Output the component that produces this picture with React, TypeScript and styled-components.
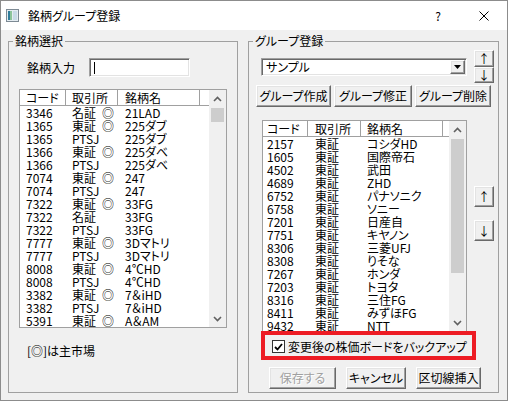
import React from "react";
import styled, { createGlobalStyle, css } from "styled-components";

type Row = [string, string, string];

interface Column {
  title: string;
  width: number;
  pad: number;
}

const MAIN = "\u2002◎";

const leftRows: Row[] = [
  ["3346", "名証" + MAIN, "21LAD"],
  ["1365", "東証" + MAIN, "225ダブ"],
  ["1365", "PTSJ", "225ダブ"],
  ["1366", "東証" + MAIN, "225ダベ"],
  ["1366", "PTSJ", "225ダベ"],
  ["7074", "東証" + MAIN, "247"],
  ["7074", "PTSJ", "247"],
  ["7322", "東証" + MAIN, "33FG"],
  ["7322", "名証", "33FG"],
  ["7322", "PTSJ", "33FG"],
  ["7777", "東証" + MAIN, "3Dマトリ"],
  ["7777", "PTSJ", "3Dマトリ"],
  ["8008", "東証" + MAIN, "4℃HD"],
  ["8008", "PTSJ", "4℃HD"],
  ["3382", "東証" + MAIN, "7＆iHD"],
  ["3382", "PTSJ", "7＆iHD"],
  ["5391", "東証" + MAIN, "A＆AM"],
];

const rightRows: Row[] = [
  ["2157", "東証", "コシダHD"],
  ["1605", "東証", "国際帝石"],
  ["4502", "東証", "武田"],
  ["4689", "東証", "ZHD"],
  ["6752", "東証", "パナソニク"],
  ["6758", "東証", "ソニー"],
  ["7201", "東証", "日産自"],
  ["7751", "東証", "キヤノン"],
  ["8306", "東証", "三菱UFJ"],
  ["8308", "東証", "りそな"],
  ["7267", "東証", "ホンダ"],
  ["7203", "東証", "トヨタ"],
  ["8316", "東証", "三住FG"],
  ["8411", "東証", "みずほFG"],
  ["9432", "東証", "NTT"],
];

const leftColumns: Column[] = [
  { title: "コード", width: 46, pad: 6 },
  { title: "取引所", width: 52, pad: 6 },
  { title: "銘柄名", width: 82, pad: 7 },
];

const rightColumns: Column[] = [
  { title: "コード", width: 45, pad: 4 },
  { title: "取引所", width: 53, pad: 7 },
  { title: "銘柄名", width: 82, pad: 6 },
];

const GlobalStyle = createGlobalStyle`
  html, body {
    margin: 0;
    padding: 0;
    background: #ffffff;
  }
  body {
    font-family: "Noto Sans CJK JP", "Noto Sans", sans-serif;
    font-size: 12px;
    color: #000000;
    font-feature-settings: "palt";
  }
  * {
    box-sizing: border-box;
  }
`;

const raised = css`
  background: #f0f0f0;
  border: 1px solid;
  border-color: #ffffff #696969 #696969 #ffffff;
  box-shadow: inset -1px -1px 0 #a0a0a0, inset 1px 1px 0 #e3e3e3;
`;

const sunken = css`
  background: #ffffff;
  border: 1px solid;
  border-color: #a0a0a0 #ffffff #ffffff #a0a0a0;
  box-shadow: inset 1px 1px 0 #696969, inset -1px -1px 0 #e3e3e3;
`;

const Window = styled.div`
  width: 508px;
  height: 401px;
  border: 1px solid #8c8c8c;
  background: #f0f0f0;
  display: flex;
  flex-direction: column;
  overflow: hidden;
`;

const TitleBar = styled.div`
  height: 29px;
  flex-shrink: 0;
  background: #ffffff;
  display: flex;
  align-items: center;
`;

const AppIcon = styled.svg`
  margin-left: 5px;
  width: 13px;
  height: 13px;
`;

const TitleText = styled.span`
  margin-left: 9px;
  font-size: 12px;
  line-height: 16px;
`;

const Caption = styled.div`
  margin-left: auto;
  height: 100%;
  display: flex;
`;

const CaptionButton = styled.div`
  width: 46px;
  height: 100%;
  display: flex;
  align-items: center;
  justify-content: center;
  font-size: 12px;
`;

const Body = styled.div`
  flex: 1;
  display: flex;
  gap: 10px;
  padding: 3px 0 0 7px;
`;

const Group = styled.fieldset<{ $width: number }>`
  margin: 0;
  padding: 0;
  min-width: 0;
  width: ${(p) => p.$width}px;
  height: 360px;
  border: 1px solid #a0a0a0;
`;

const Legend = styled.legend`
  margin-left: 4px;
  padding: 0 2px;
  font-size: 12px;
  line-height: 16px;
`;

const GroupInner = styled.div`
  display: flex;
  flex-direction: column;
  align-items: flex-start;
`;

/* ---- left side ---- */

const SearchRow = styled.div`
  margin: 9px 0 0 18px;
  height: 19px;
  display: flex;
  align-items: center;
`;

const FieldLabel = styled.span`
  width: 62px;
  line-height: 16px;
`;

const TextBox = styled.div`
  ${sunken}
  width: 101px;
  height: 19px;
  display: flex;
  align-items: center;
  padding-left: 4px;
`;

const Caret = styled.span`
  width: 1px;
  height: 12px;
  background: #000000;
`;

const Note = styled.div`
  margin: 15px 0 0 18px;
  line-height: 16px;
`;

/* ---- list view ---- */

const ListFrame = styled.div<{ $width: number; $height: number }>`
  width: ${(p) => p.$width}px;
  height: ${(p) => p.$height}px;
  border: 1px solid #a0a0a0;
  background: #ffffff;
  display: flex;
  overflow: hidden;
`;

const ListMain = styled.div`
  flex: 1;
  min-width: 0;
  display: flex;
  flex-direction: column;
  overflow: hidden;
`;

const Header = styled.div`
  height: 16px;
  flex-shrink: 0;
  display: flex;
  border-bottom: 1px solid #a0a0a0;
`;

const HeaderCell = styled.div<{ $width: number; $pad: number }>`
  width: ${(p) => p.$width}px;
  flex-shrink: 0;
  padding-left: ${(p) => p.$pad}px;
  border-right: 1px solid #a0a0a0;
  line-height: 15px;
  white-space: nowrap;
`;

const DataRow = styled.div`
  height: 13px;
  flex-shrink: 0;
  display: flex;
`;

const Cell = styled.div<{ $width: number; $pad: number }>`
  width: ${(p) => p.$width}px;
  flex-shrink: 0;
  padding-left: ${(p) => p.$pad}px;
  line-height: 13px;
  white-space: nowrap;
`;

const ScrollBar = styled.div`
  width: 17px;
  flex-shrink: 0;
  background: #f0f0f0;
  display: flex;
  flex-direction: column;
`;

const ScrollArrow = styled.div`
  height: 17px;
  flex-shrink: 0;
  display: flex;
  align-items: center;
  justify-content: center;
`;

const Track = styled.div`
  flex: 1;
  display: flex;
  flex-direction: column;
  align-items: center;
`;

const Thumb = styled.div<{ $top: number; $height: number }>`
  margin-top: ${(p) => p.$top}px;
  width: 13px;
  height: ${(p) => p.$height}px;
  background: #cdcdcd;
`;

const Chevron: React.FC<{ up?: boolean }> = ({ up }) => (
  <svg width="9" height="6" viewBox="0 0 9 6">
    <polyline
      points={up ? "1,5 4.5,1.5 8,5" : "1,1 4.5,4.5 8,1"}
      fill="none"
      stroke="#606060"
      strokeWidth="1.6"
    />
  </svg>
);

interface ListViewProps {
  className?: string;
  width: number;
  height: number;
  columns: Column[];
  rows: Row[];
  thumbTop: number;
  thumbHeight: number;
}

const ListView: React.FC<ListViewProps> = ({
  className,
  width,
  height,
  columns,
  rows,
  thumbTop,
  thumbHeight,
}) => (
  <ListFrame className={className} $width={width} $height={height}>
    <ListMain>
      <Header>
        {columns.map((c) => (
          <HeaderCell key={c.title} $width={c.width} $pad={c.pad}>
            {c.title}
          </HeaderCell>
        ))}
      </Header>
      {rows.map((r, i) => (
        <DataRow key={i}>
          {columns.map((c, j) => (
            <Cell key={j} $width={c.width} $pad={c.pad}>
              {r[j]}
            </Cell>
          ))}
        </DataRow>
      ))}
    </ListMain>
    <ScrollBar>
      <ScrollArrow>
        <Chevron up />
      </ScrollArrow>
      <Track>
        <Thumb $top={thumbTop} $height={thumbHeight} />
      </Track>
      <ScrollArrow>
        <Chevron />
      </ScrollArrow>
    </ScrollBar>
  </ListFrame>
);

const StockList = styled(ListView)`
  margin: 12px 0 0 10px;
`;

const GroupList = styled(ListView)`
  margin-left: 13px;
`;

/* ---- right side ---- */

const ComboRow = styled.div`
  margin: 1px 0 0 12px;
  height: 33px;
  display: flex;
  align-items: center;
`;

const Combo = styled.div`
  ${sunken}
  width: 206px;
  height: 18px;
  display: flex;
  align-items: center;
  padding: 0 1px 0 4px;
`;

const ComboText = styled.span`
  flex: 1;
  line-height: 14px;
`;

const DropButton = styled.div`
  ${raised}
  width: 15px;
  height: 14px;
  display: flex;
  align-items: center;
  justify-content: center;
`;

const ArrowStack = styled.div`
  margin-left: 7px;
  display: flex;
  flex-direction: column;
`;

const ArrowButton = styled.div<{ $height: number }>`
  ${raised}
  width: 20px;
  height: ${(p) => p.$height}px;
  display: flex;
  align-items: center;
  justify-content: center;
  font-size: 12px;
  line-height: 12px;
`;

const ButtonRow = styled.div<{ $top: number; $left: number; $gap: number }>`
  margin: ${(p) => p.$top}px 0 0 ${(p) => p.$left}px;
  display: flex;
  gap: ${(p) => p.$gap}px;
`;

const PushButton = styled.div<{ $width: number; $disabled?: boolean }>`
  ${raised}
  width: ${(p) => p.$width}px;
  height: 22px;
  display: flex;
  align-items: center;
  justify-content: center;
  line-height: 16px;
  white-space: nowrap;
  color: ${(p) => (p.$disabled ? "#a0a0a0" : "#000000")};
  text-shadow: ${(p) => (p.$disabled ? "1px 1px 0 #ffffff" : "none")};
`;

const ListArea = styled.div`
  margin-top: 13px;
  display: flex;
`;

const SideButtons = styled.div`
  margin: 66px 0 0 7px;
  display: flex;
  flex-direction: column;
  gap: 13px;
`;

const BackupRow = styled.div`
  margin: -1px 0 0 12px;
  width: 215px;
  height: 29px;
  border: 4px solid #ed1c24;
  display: flex;
  align-items: center;
  padding: 2px 0 0 7px;
  gap: 3px;
`;

const CheckBox = styled.div`
  width: 13px;
  height: 13px;
  border: 1px solid #333333;
  background: #ffffff;
  display: flex;
  align-items: center;
  justify-content: center;
`;

const CheckLabel = styled.span`
  line-height: 16px;
  white-space: nowrap;
`;

const App: React.FC = () => (
  <>
    <GlobalStyle />
    <Window>
      <TitleBar>
        <AppIcon viewBox="0 0 13 13">
          <rect x="0.5" y="0.5" width="12" height="12" fill="#e4ecf1" stroke="#7d8a94" />
          <rect x="2" y="2" width="2" height="9" fill="#2f7d9a" />
          <rect x="4" y="2" width="2" height="9" fill="#8cc49a" />
          <rect x="7" y="2" width="4" height="9" fill="#c8dae6" />
        </AppIcon>
        <TitleText>銘柄グループ登録</TitleText>
        <Caption>
          <CaptionButton>?</CaptionButton>
          <CaptionButton>
            <svg width="10" height="10" viewBox="0 0 10 10">
              <path d="M0.5 0.5 L9.5 9.5 M9.5 0.5 L0.5 9.5" stroke="#000" strokeWidth="1" />
            </svg>
          </CaptionButton>
        </Caption>
      </TitleBar>
      <Body>
        <Group $width={230}>
          <Legend>銘柄選択</Legend>
          <GroupInner>
            <SearchRow>
              <FieldLabel>銘柄入力</FieldLabel>
              <TextBox>
                <Caret />
              </TextBox>
            </SearchRow>
            <StockList
              width={208}
              height={239}
              columns={leftColumns}
              rows={leftRows}
              thumbTop={1}
              thumbHeight={14}
            />
            <Note>[◎]は主市場</Note>
          </GroupInner>
        </Group>
        <Group $width={251}>
          <Legend>グループ登録</Legend>
          <GroupInner>
            <ComboRow>
              <Combo>
                <ComboText>サンプル</ComboText>
                <DropButton>
                  <svg width="7" height="4" viewBox="0 0 7 4">
                    <path d="M0 0 H7 L3.5 4 Z" fill="#000" />
                  </svg>
                </DropButton>
              </Combo>
              <ArrowStack>
                <ArrowButton $height={17}>↑</ArrowButton>
                <ArrowButton $height={16}>↓</ArrowButton>
              </ArrowStack>
            </ComboRow>
            <ButtonRow $top={2} $left={7} $gap={3}>
              <PushButton $width={75}>グループ作成</PushButton>
              <PushButton $width={78}>グループ修正</PushButton>
              <PushButton $width={76}>グループ削除</PushButton>
            </ButtonRow>
            <ListArea>
              <GroupList
                width={205}
                height={212}
                columns={rightColumns}
                rows={rightRows}
                thumbTop={1}
                thumbHeight={134}
              />
              <SideButtons>
                <ArrowButton $height={21}>↑</ArrowButton>
                <ArrowButton $height={21}>↓</ArrowButton>
              </SideButtons>
            </ListArea>
            <BackupRow>
              <CheckBox>
                <svg width="9" height="8" viewBox="0 0 9 8">
                  <path d="M1 4 L3.5 6.5 L8 1" fill="none" stroke="#000" strokeWidth="1.8" />
                </svg>
              </CheckBox>
              <CheckLabel>変更後の株価ボードをバックアップ</CheckLabel>
            </BackupRow>
            <ButtonRow $top={7} $left={20} $gap={10}>
              <PushButton $width={67} $disabled>
                保存する
              </PushButton>
              <PushButton $width={60}>キャンセル</PushButton>
              <PushButton $width={65}>区切線挿入</PushButton>
            </ButtonRow>
          </GroupInner>
        </Group>
      </Body>
    </Window>
  </>
);

export default App;
